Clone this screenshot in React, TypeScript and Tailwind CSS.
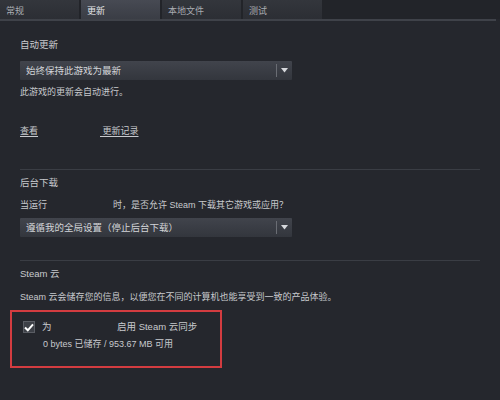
import React from "react";

const font = { fontFamily: '"Liberation Sans", "Noto Sans CJK SC", sans-serif' };

function Tab({ label, active }: { label: string; active?: boolean }) {
  return (
    <div
      className={
        "w-[79px] h-[19px] flex items-center pl-[6px] pt-[2px] text-[9px] " +
        (active
          ? "bg-gradient-to-b from-[#474a53] to-[#3a3d45] text-[#e4e5e8]"
          : "bg-gradient-to-b from-[#33363c] to-[#2c2e34] text-[#a9acb2]")
      }
    >
      {label}
    </div>
  );
}

function Dropdown({ label }: { label: string }) {
  return (
    <div className="w-[272px] h-[19px] flex items-center bg-gradient-to-b from-[#41444c] to-[#33363d] rounded-[1px]">
      <span className="flex-1 pl-[6px] text-[9.5px] text-[#d3d5d9] leading-none">{label}</span>
      <div className="w-[1px] h-[13px] bg-[#6a6d74]" />
      <div className="w-[15px] flex justify-center items-center">
        <svg width="7" height="5" viewBox="0 0 7 5">
          <path d="M0 0 L7 0 L3.5 4.5 Z" fill="#d6d8dc" />
        </svg>
      </div>
    </div>
  );
}

export default function App() {
  return (
    <div
      className="w-[500px] h-[400px] bg-[#25272d] overflow-hidden text-[#c8cace] text-[9px] leading-[14px]"
      style={font}
    >
      <div className="flex gap-[2px] bg-[#222429]">
        <Tab label="常规" />
        <Tab label="更新" active />
        <Tab label="本地文件" />
        <Tab label="测试" />
        <div className="flex-1" />
      </div>
      <div className="h-[2px] w-[496px] bg-[#3f4249]" />

      <div className="pl-[20px]">
        <div className="mt-[17px] text-[9.5px]">自动更新</div>
        <div className="mt-[9px]">
          <Dropdown label="始终保持此游戏为最新" />
        </div>
        <div className="mt-[5px]">此游戏的更新会自动进行。</div>
        <div className="mt-[25px] flex">
          <span className="w-[80px]">
            <span className="underline underline-offset-2">查看</span>
          </span>
          <span className="underline underline-offset-2">&nbsp;更新记录</span>
        </div>

        <div className="mt-[31px] h-[1px] w-[460px] bg-[#3a3d44]" />

        <div className="mt-[6px] text-[9.5px]">后台下载</div>
        <div className="mt-[8px] flex">
          <span className="w-[93px]">当运行</span>
          <span>时，是否允许 Steam 下载其它游戏或应用？</span>
        </div>
        <div className="mt-[6px]">
          <Dropdown label="遵循我的全局设置（停止后台下载）" />
        </div>

        <div className="mt-[23px] h-[1px] w-[460px] bg-[#3a3d44]" />

        <div className="mt-[6px] text-[9.5px]">Steam 云</div>
        <div className="mt-[9px]">Steam 云会储存您的信息，以便您在不同的计算机也能享受到一致的产品体验。</div>

        <div className="mt-[6px] -ml-[10px] w-[212px] h-[58px] border-2 border-[#d33c40]">
          <div className="pt-[8px] pl-[11px] flex items-center">
            <div className="w-[12px] h-[12px] bg-[#3d4047] border border-[#5a5d64] flex items-center justify-center">
              <svg width="10" height="9" viewBox="0 0 10 9">
                <path d="M1 4.5 L3.8 7.3 L9 1.3" stroke="#ffffff" strokeWidth="2" fill="none" />
              </svg>
            </div>
            <span className="ml-[7px] w-[75px] text-[9.5px]">为</span>
            <span className="text-[9.5px]">启用 Steam 云同步</span>
          </div>
          <div className="mt-[3px] pl-[31px]">0 bytes 已储存 / 953.67 MB 可用</div>
        </div>
      </div>
    </div>
  );
}
